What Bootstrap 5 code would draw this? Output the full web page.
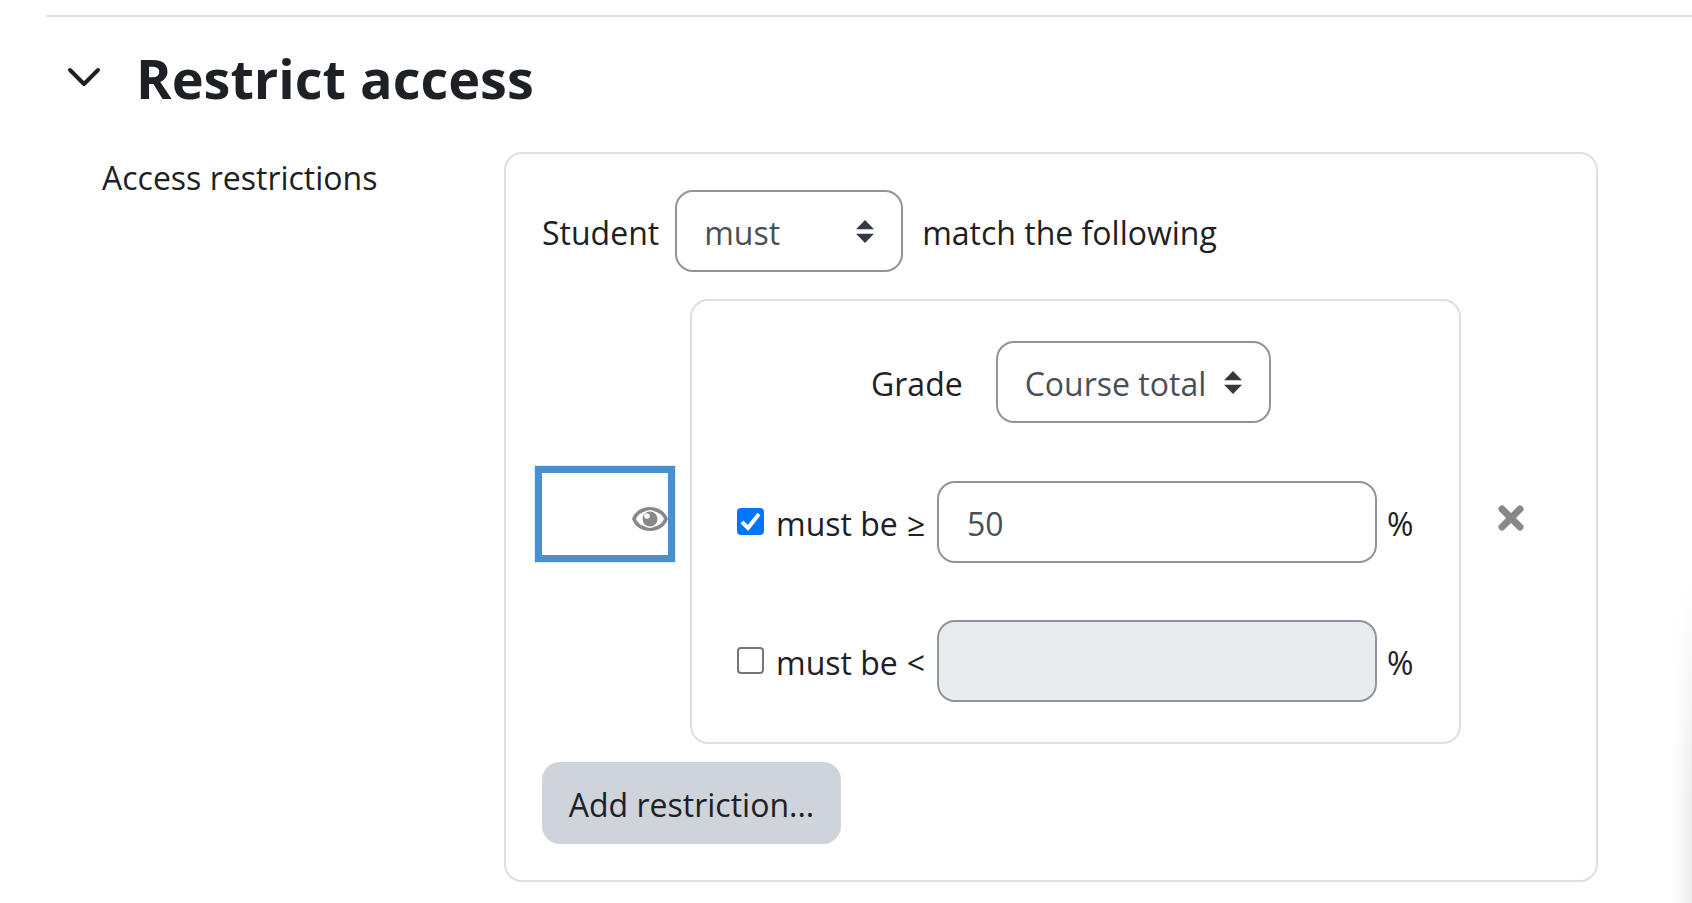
<!DOCTYPE html>
<html lang="en">
<head>
<meta charset="utf-8">
<meta name="viewport" content="width=device-width, initial-scale=1">
<title>Restrict access</title>
<link href="https://cdn.jsdelivr.net/npm/bootstrap@5.3.0/dist/css/bootstrap.min.css" rel="stylesheet">
<style>
  body { font-family: "Open Sans", "Noto Sans", sans-serif; font-size: 32px; line-height: 48px; color: #1d2125; background: #fff; }
  .settings { padding: 15px 0 20px 46px; }
  .section-rule { border-top: 2px solid #dee2e6; }
  .section-head { padding: 23px 0 0 16px; gap: 30px; height: 135px; }
  .section-head h3 { font-size: 54px; line-height: 76px; font-weight: 700; }
  .toggle { width: 44px; height: 44px; margin-top: 16px; color: #1d2125; }
  .setting-row { padding-right: 94px; }
  .setting-name { width: 458px; padding: 2px 0 0 56px; }
  .panel { border: 2px solid #dfdfdf; border-radius: 18px; }
  .outer { padding: 36px 28px; }
  .lead-row { padding-left: 8px; margin-bottom: 27px; }
  .field-text { padding-top: 3px; }
  .form-select, .form-control { height: 82px; font-size: 32px; line-height: 48px; color: #495057; border: 2px solid #8f959e; border-radius: 18px; padding: 3px 28px 0; }
  .form-select { padding-left: 27px; background-image: url("data:image/svg+xml,%3Csvg xmlns='http://www.w3.org/2000/svg' viewBox='0 0 4 5' preserveAspectRatio='none'%3E%3Cpath fill='%23343a40' d='M2 0L0 2h4zm0 5L0 3h4z'/%3E%3C/svg%3E"); background-size: 18px 23px; background-position: right 27px top 28px; }
  .form-control:disabled { background: #e9ecef; }
  .select-must { width: 228px; margin: 0 19px 0 16px; }
  .select-grade { width: 275px; margin-left: 33px; }
  .eye-btn { width: 140px; height: 96px; border: 7px solid #4a90cf; outline: 1px solid #dcebf6; border-radius: 0; padding: 10px 0 0; margin: -16px 15px 0 1px; }
  .eye-btn:hover { border-color: #4a90cf; }
  .inner { padding: 40px 46px 40px 45px; }
  .grade-row { padding-left: 134px; margin-bottom: 58px; }
  .limit-gap { margin-bottom: 57px; }
  .limit-name { width: 161px; margin-left: 12px; padding-right: 12px; }
  .form-check-input { width: 27px; height: 27px; margin: -2px 0 0; border: 2px solid #767676; }
  .form-check-input[type=checkbox] { border-radius: 4px; }
  .form-check-input:checked[type=checkbox] { background-color: #0075ff; border-color: #0075ff; background-size: 27px 27px; background-image: url("data:image/svg+xml,%3Csvg xmlns='http://www.w3.org/2000/svg' viewBox='0 0 27 27'%3E%3Cpath fill='none' stroke='%23fff' stroke-width='4' d='M5 14l6 6L22 6'/%3E%3C/svg%3E"); }
  .unit { width: 36px; padding-left: 10px; }
  .remove-cell { width: 107px; padding: 0 8px 8px 0; }
  .add-btn { height: 82px; width: 299px; font-size: 32px; line-height: 48px; color: #1d2125; background: #ced4da; border: 0; border-radius: 18px; margin: 18px 0 0 8px; padding: 4px 0 0; }
  .drawer-edge { right: 0; top: 580px; bottom: 0; width: 24px; pointer-events: none; background: linear-gradient(to left, rgba(0,0,0,.08), rgba(0,0,0,.02) 50%, transparent); -webkit-mask-image: linear-gradient(transparent, #000 220px); mask-image: linear-gradient(transparent, #000 220px); }
</style>
</head>
<body class="position-relative min-vh-100">
<main class="settings">
  <div class="section-rule"></div>
  <div class="section-head d-flex align-items-start">
    <button type="button" class="toggle btn p-0 border-0 d-flex align-items-center justify-content-center" aria-label="Collapse Restrict access">
      <svg width="34" height="22" viewBox="0 0 34 22" fill="none" stroke="currentColor" stroke-width="4" stroke-linecap="round" stroke-linejoin="round"><path d="M3 3l14 14L31 3"/></svg>
    </button>
    <h3 class="mb-0">Restrict access</h3>
  </div>
  <div class="setting-row d-flex align-items-start">
    <div class="setting-name flex-shrink-0">Access restrictions</div>
    <form class="panel outer flex-grow-1">
      <div class="lead-row d-flex align-items-center">
        <label for="must" class="field-text">Student</label>
        <select id="must" class="form-select select-must"><option>must</option><option>must not</option></select>
        <span class="field-text">match the following</span>
      </div>
      <div class="d-flex align-items-center">
        <button type="button" class="eye-btn btn d-flex align-items-center justify-content-end flex-shrink-0" aria-label="Displayed if student doesn't meet this condition">
          <svg width="36" height="26" viewBox="0 0 36 26"><path fill="#888" d="M0 13C3 5 10 1 18 1s15 4 18 12c-3 8-10 12-18 12S3 21 0 13z"/><path fill="#fff" d="M4 13c2-5 7-8 14-8s12 3 14 8c-2 5-7 8-14 8S6 18 4 13z"/><circle cx="18" cy="13" r="9" fill="#fff"/><circle cx="18" cy="13" r="7.5" fill="#888"/><circle cx="15" cy="10" r="2.8" fill="#fff"/></svg>
        </button>
        <div class="panel inner flex-grow-1">
          <div class="grade-row d-flex align-items-center">
            <label for="grade" class="field-text">Grade</label>
            <select id="grade" class="form-select select-grade"><option>Course total</option></select>
          </div>
          <div class="limit-gap d-flex align-items-center">
            <input id="min" type="checkbox" class="form-check-input flex-shrink-0" checked>
            <label for="min" class="limit-name field-text d-flex flex-shrink-0 text-nowrap">must be<span class="ms-auto">≥</span></label>
            <input type="text" class="form-control" value="50" aria-label="Minimum grade">
            <div class="unit field-text flex-shrink-0">%</div>
          </div>
          <div class="d-flex align-items-center">
            <input id="max" type="checkbox" class="form-check-input flex-shrink-0">
            <label for="max" class="limit-name field-text d-flex flex-shrink-0 text-nowrap">must be<span class="ms-auto">&lt;</span></label>
            <input type="text" class="form-control" aria-label="Maximum grade" disabled>
            <div class="unit field-text flex-shrink-0">%</div>
          </div>
        </div>
        <div class="remove-cell flex-shrink-0 d-flex justify-content-center">
          <button type="button" class="btn p-0 border-0 d-flex" aria-label="Delete">
            <svg width="26" height="26" viewBox="0 0 26 26" stroke="#888" stroke-width="7" stroke-linecap="round"><path d="M4 4l18 18M22 4L4 22"/></svg>
          </button>
        </div>
      </div>
      <button type="button" class="add-btn btn">Add restriction...</button>
    </form>
  </div>
</main>
<div class="drawer-edge position-absolute"></div>
<script src="https://cdn.jsdelivr.net/npm/bootstrap@5.3.0/dist/js/bootstrap.bundle.min.js"></script>
</body>
</html>
